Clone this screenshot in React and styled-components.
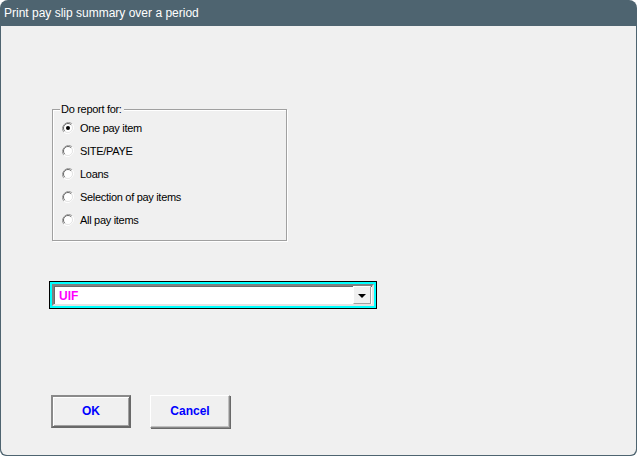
import React, { useState } from 'react'
import styled, { createGlobalStyle } from 'styled-components'

const Global = createGlobalStyle`
  html, body {
    margin: 0;
    padding: 0;
    background: #ffffff;
  }
  body {
    font-family: "Liberation Sans", Arial, sans-serif;
  }
`

const Window = styled.div`
  width: 637px;
  height: 456px;
  display: flex;
  flex-direction: column;
  border-radius: 8px 8px 6px 6px;
  overflow: hidden;
  background: #4e6470;
`

const TitleBar = styled.div`
  height: 26px;
  flex: none;
  display: flex;
  align-items: center;
  padding: 0 0 1px 4px;
  box-sizing: border-box;
  color: #ffffff;
  font-size: 12px;
  font-family: "Liberation Sans", Arial, sans-serif;
`

const Client = styled.div`
  flex: 1;
  margin: 0 1px 1px 1px;
  background: #f0f0f0;
  border-radius: 0 0 6px 6px;
  padding: 83px 0 0 48px;
  display: flex;
  flex-direction: column;
  align-items: flex-start;
`

const GroupBox = styled.div`
  position: relative;
  margin-left: 3px;
  width: 235px;
  height: 132px;
  box-sizing: border-box;
  border: 1px solid #a0a0a0;
  box-shadow: 1px 1px 0 #ffffff, inset 1px 1px 0 #ffffff;
  padding: 6px 0 0 9px;
  display: flex;
  flex-direction: column;
`

const Caption = styled.span`
  position: absolute;
  top: -7px;
  left: 7px;
  padding: 0 2px 0 1px;
  background: #f0f0f0;
  font-size: 11px;
  letter-spacing: -0.3px;
  color: #000;
  line-height: 13px;
`

const RadioRow = styled.label`
  display: flex;
  align-items: center;
  height: 23px;
  gap: 6px;
  font-size: 11px;
  letter-spacing: -0.3px;
  color: #000;
  cursor: default;
`

const RadioMark = ({ checked }) => (
  <svg width="12" height="12" viewBox="0 0 12 12">
    <path d="M10.2 1.8 A6 6 0 0 0 1.8 10.2" fill="none" stroke="#a0a0a0" strokeWidth="1" />
    <path d="M1.8 10.2 A6 6 0 0 0 10.2 1.8" fill="none" stroke="#ffffff" strokeWidth="1" />
    <circle cx="6" cy="6" r="4.5" fill="#ffffff" />
    <path d="M9.2 2.8 A4.5 4.5 0 0 0 2.8 9.2" fill="none" stroke="#696969" strokeWidth="1" />
    <path d="M2.8 9.2 A4.5 4.5 0 0 0 9.2 2.8" fill="none" stroke="#e3e3e3" strokeWidth="1" />
    {checked && <circle cx="6" cy="6" r="2" fill="#000000" />}
  </svg>
)

const ComboFrame = styled.div`
  margin-top: 40px;
  width: 328px;
  height: 28px;
  box-sizing: border-box;
  border: 1px solid #000000;
  background: #00ffff;
  padding: 2px;
  display: flex;
`

const ComboField = styled.div`
  flex: 1;
  display: flex;
  align-items: center;
  background: #ffffff;
  border-style: solid;
  border-width: 2px;
  border-color: #808080 #e3e3e3 #e3e3e3 #808080;
  box-shadow: inset 1px 1px 0 #696969;
  padding: 0 1px 0 5px;
`

const ComboText = styled.span`
  flex: 1;
  color: #ff00ff;
  font-weight: bold;
  font-size: 12px;
  padding-top: 1px;
`

const DropButton = styled.div`
  width: 18px;
  height: 18px;
  background: #f0f0f0;
  border-style: solid;
  border-width: 1px;
  border-color: #ffffff #a0a0a0 #a0a0a0 #ffffff;
  display: flex;
  align-items: center;
  justify-content: center;
  box-sizing: border-box;
`

const Arrow = styled.span`
  width: 0;
  height: 0;
  border-left: 4px solid transparent;
  border-right: 4px solid transparent;
  border-top: 4px solid #000000;
  margin-top: 1px;
`

const ButtonRow = styled.div`
  margin-top: 86px;
  margin-left: 2px;
  display: flex;
  gap: 19px;
`

const Button = styled.button`
  width: 80px;
  height: 33px;
  background: #f0f0f0;
  color: #0000ff;
  font-family: "Liberation Sans", Arial, sans-serif;
  font-weight: bold;
  font-size: 12px;
  padding: 0 0 1px 0;
  border-style: solid;
  border-width: ${p => (p.$default ? '2px' : '1px')};
  border-color: ${p =>
    p.$default ? '#8a8a8a #696969 #696969 #8a8a8a' : '#ffffff #8a8a8a #8a8a8a #ffffff'};
  box-shadow: ${p =>
    p.$default
      ? 'inset 1px 1px 0 #ffffff, inset -1px -1px 0 #a0a0a0'
      : 'inset -1px -1px 0 #c0c0c0, 1px 1px 0 #696969'};
  outline: none;
`

const items = ['One pay item', 'SITE/PAYE', 'Loans', 'Selection of pay items', 'All pay items']

export default function App() {
  const [choice, setChoice] = useState(0)

  return (
    <>
      <Global />
      <Window>
        <TitleBar>Print pay slip summary over a period</TitleBar>
        <Client>
          <GroupBox>
            <Caption>Do report for:</Caption>
            {items.map((label, i) => (
              <RadioRow key={label} onClick={() => setChoice(i)}>
                <RadioMark checked={choice === i} />
                {label}
              </RadioRow>
            ))}
          </GroupBox>
          <ComboFrame>
            <ComboField>
              <ComboText>UIF</ComboText>
              <DropButton>
                <Arrow />
              </DropButton>
            </ComboField>
          </ComboFrame>
          <ButtonRow>
            <Button $default>OK</Button>
            <Button>Cancel</Button>
          </ButtonRow>
        </Client>
      </Window>
    </>
  )
}
